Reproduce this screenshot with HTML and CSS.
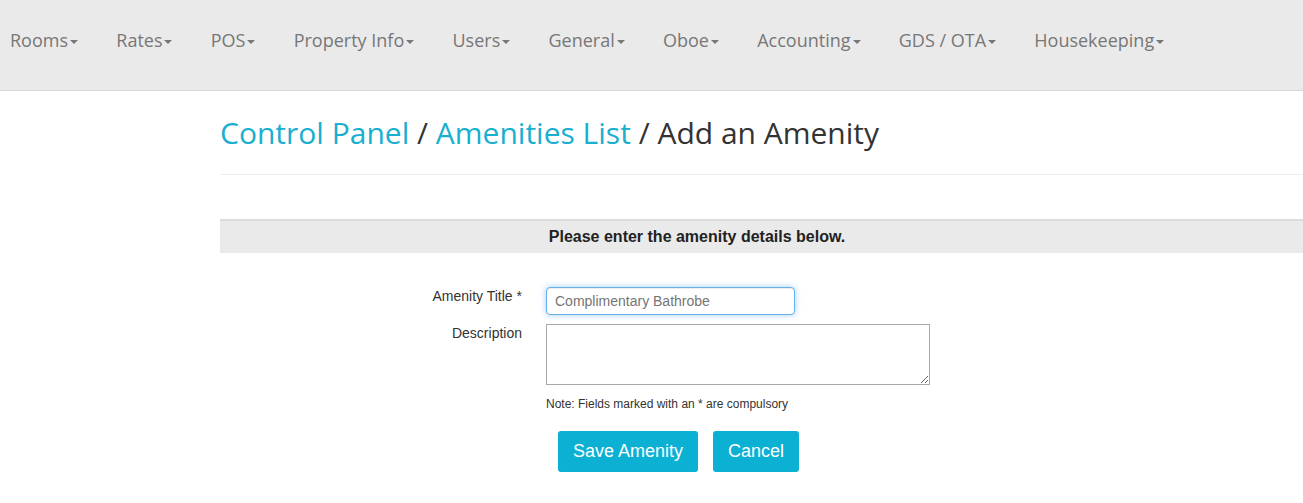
FILE: index.html
```html
<!DOCTYPE html>
<html lang="en">
<head>
<meta charset="utf-8">
<title>Add an Amenity</title>
<link rel="stylesheet" href="styles.css">
</head>
<body>
<nav class="topnav">
  <ul class="menu">
    <li><a href="#">Rooms<span class="caret"></span></a></li>
    <li><a href="#">Rates<span class="caret"></span></a></li>
    <li><a href="#">POS<span class="caret"></span></a></li>
    <li><a href="#">Property Info<span class="caret"></span></a></li>
    <li><a href="#">Users<span class="caret"></span></a></li>
    <li><a href="#">General<span class="caret"></span></a></li>
    <li><a href="#">Oboe<span class="caret"></span></a></li>
    <li><a href="#">Accounting<span class="caret"></span></a></li>
    <li><a href="#">GDS / OTA<span class="caret"></span></a></li>
    <li><a href="#">Housekeeping<span class="caret"></span></a></li>
  </ul>
</nav>
<main class="content">
  <h1 class="crumbs"><a href="#">Control Panel</a> / <a href="#">Amenities List</a> / Add an Amenity</h1>
  <hr class="rule">
  <div class="panel-head">Please enter the amenity details below.</div>
  <form class="form">
    <label class="lbl" for="title">Amenity Title *</label>
    <div class="field"><input id="title" class="text-input" type="text" value="Complimentary Bathrobe"></div>
    <label class="lbl" for="desc">Description</label>
    <div class="field"><textarea id="desc" class="textarea"></textarea></div>
    <div></div>
    <p class="note">Note: Fields marked with an * are compulsory</p>
    <div></div>
    <div class="actions">
      <button type="button" class="btn">Save Amenity</button>
      <button type="button" class="btn">Cancel</button>
    </div>
  </form>
</main>
</body>
</html>
```
FILE: styles.css
```css
* { box-sizing: border-box; }
html, body { margin: 0; padding: 0; overflow: hidden; }
body {
  font-family: "Liberation Sans", Arial, sans-serif;
  font-size: 14px;
  color: #333;
  background: #fff;
}
.topnav {
  height: 91px;
  background: #eaeaea;
  border-bottom: 1px solid #d8d8d8;
}
.menu {
  list-style: none;
  margin: 0;
  padding: 27px 0 0 10px;
  display: flex;
  gap: 38.25px;
}
.menu a {
  font-family: "Open Sans", sans-serif;
  font-size: 18px;
  line-height: 26px;
  color: #777;
  text-decoration: none;
  white-space: nowrap;
}
.caret {
  display: inline-block;
  width: 0;
  height: 0;
  margin-left: 2px;
  vertical-align: middle;
  border-top: 4px solid #777;
  border-left: 4px solid transparent;
  border-right: 4px solid transparent;
}
.content {
  margin-left: 220px;
}
.crumbs {
  margin: 25px 0 0;
  font-family: "Open Sans", sans-serif;
  font-size: 30px;
  font-weight: 400;
  line-height: 33px;
  color: #333;
}
.crumbs a {
  color: #18afd0;
  text-decoration: none;
}
.rule {
  margin: 25px 0 0;
  border: 0;
  border-top: 1px solid #eee;
  height: 0;
}
.panel-head {
  margin-top: 44px;
  border-top: 2px solid #dcdcdc;
  background: #eaeaea;
  height: 34px;
  line-height: 32px;
  font-weight: bold;
  font-size: 16px;
  color: #222;
  text-align: center;
  padding-right: 129px;
}
.form {
  margin-top: 34px;
  display: grid;
  grid-template-columns: 302px auto;
  column-gap: 24px;
  row-gap: 9px;
  align-items: start;
}
.lbl {
  text-align: right;
  line-height: 20px;
  margin-top: -1px;
  color: #333;
}
.text-input {
  display: block;
  width: 249px;
  height: 28px;
  padding: 0 8px;
  font-family: "Liberation Sans", Arial, sans-serif;
  font-size: 14px;
  color: #757575;
  border: 1px solid #66afe9;
  border-radius: 4px;
  outline: 0;
  box-shadow: inset 0 1px 1px rgba(0,0,0,.075), 0 0 6px rgba(102,175,233,.6);
}
.textarea {
  display: block;
  width: 384px;
  height: 61px;
  margin: 0;
  border: 1px solid #a9a9a9;
  border-radius: 0;
  font-family: "Liberation Sans", Arial, sans-serif;
  font-size: 14px;
}
.note {
  margin: 2px 0 0;
  font-size: 12px;
  line-height: 16px;
  color: #333;
}
.actions {
  margin-top: 10px;
  padding-left: 12px;
  display: flex;
  gap: 15px;
}
.btn {
  height: 41px;
  padding: 0 15px;
  border: 0;
  border-radius: 3px;
  background: #0bb0d3;
  color: #fff;
  font-family: "Liberation Sans", Arial, sans-serif;
  font-size: 18px;
  line-height: 21px;
  cursor: pointer;
}
```
